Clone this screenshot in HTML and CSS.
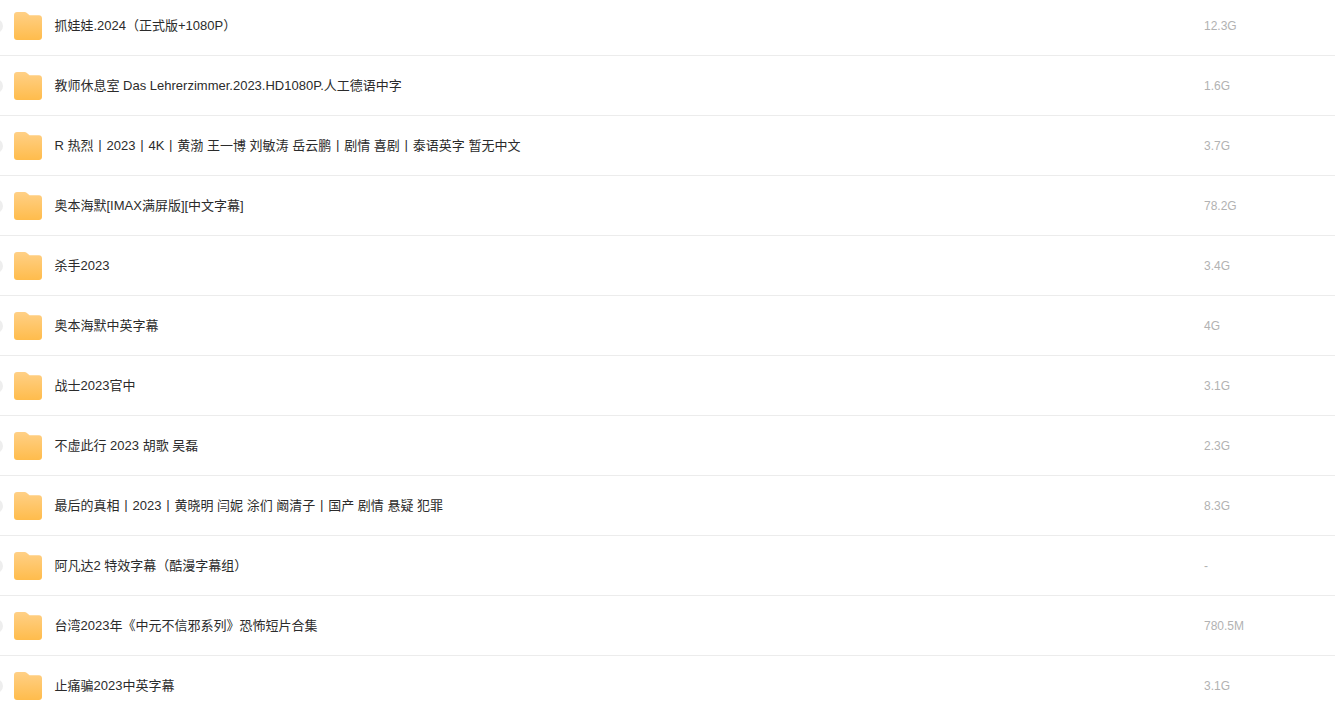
FILE: index.html
```html
<!DOCTYPE html>
<html lang="zh-CN">
<head>
    <meta charset="UTF-8">
    <title>文件列表</title>
    <link rel="stylesheet" href="styles.css">
</head>
<body>
    <svg width="0" height="0" class="defs">
        <defs>
            <linearGradient id="folderFill" x1="0" y1="0" x2="0" y2="1">
                <stop offset="0" stop-color="#ffd086"/>
                <stop offset="1" stop-color="#ffbc4c"/>
            </linearGradient>
            <symbol id="folder" viewBox="0 0 28 28">
                <path d="M3 0h7.500c1 0 1.700.4 2.400 1.100L15.500 3.300H25c1.700 0 3 1.300 3 3V25c0 1.700-1.300 3-3 3H3c-1.700 0-3-1.300-3-3V3c0-1.700 1.300-3 3-3z" fill="url(#folderFill)"/>
            </symbol>
        </defs>
    </svg>

    <div class="file-list">
        <div class="file-row">
            <span class="check"></span>
            <svg class="folder-icon"><use href="#folder"/></svg>
            <span class="file-name">抓娃娃.2024（正式版+1080P）</span>
            <span class="file-size">12.3G</span>
        </div>
        <div class="file-row">
            <span class="check"></span>
            <svg class="folder-icon"><use href="#folder"/></svg>
            <span class="file-name">教师休息室 Das Lehrerzimmer.2023.HD1080P.人工德语中字</span>
            <span class="file-size">1.6G</span>
        </div>
        <div class="file-row">
            <span class="check"></span>
            <svg class="folder-icon"><use href="#folder"/></svg>
            <span class="file-name">R 热烈丨2023丨4K丨黄渤 王一博 刘敏涛 岳云鹏丨剧情 喜剧丨泰语英字 暂无中文</span>
            <span class="file-size">3.7G</span>
        </div>
        <div class="file-row">
            <span class="check"></span>
            <svg class="folder-icon"><use href="#folder"/></svg>
            <span class="file-name">奥本海默[IMAX满屏版][中文字幕]</span>
            <span class="file-size">78.2G</span>
        </div>
        <div class="file-row">
            <span class="check"></span>
            <svg class="folder-icon"><use href="#folder"/></svg>
            <span class="file-name">杀手2023</span>
            <span class="file-size">3.4G</span>
        </div>
        <div class="file-row">
            <span class="check"></span>
            <svg class="folder-icon"><use href="#folder"/></svg>
            <span class="file-name">奥本海默中英字幕</span>
            <span class="file-size">4G</span>
        </div>
        <div class="file-row">
            <span class="check"></span>
            <svg class="folder-icon"><use href="#folder"/></svg>
            <span class="file-name">战士2023官中</span>
            <span class="file-size">3.1G</span>
        </div>
        <div class="file-row">
            <span class="check"></span>
            <svg class="folder-icon"><use href="#folder"/></svg>
            <span class="file-name">不虚此行 2023 胡歌 吴磊</span>
            <span class="file-size">2.3G</span>
        </div>
        <div class="file-row">
            <span class="check"></span>
            <svg class="folder-icon"><use href="#folder"/></svg>
            <span class="file-name">最后的真相丨2023丨黄晓明 闫妮 涂们 阚清子丨国产 剧情 悬疑 犯罪</span>
            <span class="file-size">8.3G</span>
        </div>
        <div class="file-row">
            <span class="check"></span>
            <svg class="folder-icon"><use href="#folder"/></svg>
            <span class="file-name">阿凡达2 特效字幕（酷漫字幕组）</span>
            <span class="file-size">-</span>
        </div>
        <div class="file-row">
            <span class="check"></span>
            <svg class="folder-icon"><use href="#folder"/></svg>
            <span class="file-name">台湾2023年《中元不信邪系列》恐怖短片合集</span>
            <span class="file-size">780.5M</span>
        </div>
        <div class="file-row">
            <span class="check"></span>
            <svg class="folder-icon"><use href="#folder"/></svg>
            <span class="file-name">止痛骗2023中英字幕</span>
            <span class="file-size">3.1G</span>
        </div>
    </div>
</body>
</html>
```

FILE: styles.css
```css
* {
    margin: 0;
    padding: 0;
    box-sizing: border-box;
}

html, body {
    height: 100%;
    overflow: hidden;
    background: #fff;
}

body {
    font-family: "Liberation Sans", "Noto Sans CJK SC", sans-serif;
    font-size: 13px;
    color: #2b2b2b;
}

.defs {
    display: block;
    height: 0;
}

.file-list {
    margin-top: -4px;
}

.file-row {
    display: flex;
    align-items: center;
    height: 60px;
    border-bottom: 1px solid #ececec;
}

.check {
    flex: none;
    width: 14px;
    height: 14px;
    margin-left: -11px;
    margin-top: 1px;
    border: 3px solid #eee;
    border-radius: 50%;
    background: #fff;
}

.folder-icon {
    flex: none;
    width: 28px;
    height: 28px;
    margin-left: 11px;
    margin-top: 1px;
}

.file-name {
    flex: none;
    width: 1149.5px;
    margin-left: 12.5px;
    white-space: nowrap;
    line-height: 20px;
}

.file-size {
    font-size: 12px;
    color: #b2b2b2;
    line-height: 20px;
}
```
